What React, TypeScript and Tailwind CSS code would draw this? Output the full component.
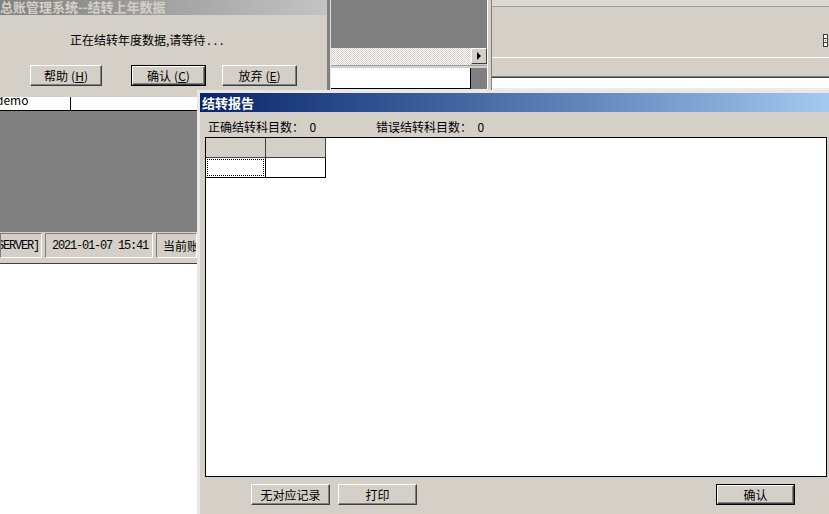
import React from 'react';

function Btn({ children, className, isDefault }: { children: React.ReactNode; className: string; isDefault?: boolean }) {
    const face = (
        <div className="flex h-full w-full items-center justify-center border border-t-white border-l-white border-r-[#404040] border-b-[#404040] bg-[#d4d0c8] shadow-[inset_-1px_-1px_0_#808080] leading-none text-black">
            {children}
        </div>
    );
    if (isDefault) {
        return <div className={`${className} border border-black`}>{face}</div>;
    }
    return <div className={className}>{face}</div>;
}

function Hot({ label, k }: { label: string; k: string }) {
    return (
        <span className="whitespace-nowrap">
            {label}
            <span className="ml-[3px]">(<span className="underline">{k}</span>)</span>
        </span>
    );
}

// status bar pane, sunken
function Pane({ children, className }: { children: React.ReactNode; className: string }) {
    return (
        <div className={`${className} h-[25px] flex items-center border border-t-[#808080] border-l-[#808080] border-r-white border-b-white overflow-hidden whitespace-nowrap`}>
            {children}
        </div>
    );
}

export default function App() {
    return (
        <div className="relative w-[829px] h-[514px] overflow-hidden bg-white text-[12px] text-black font-['Noto_Sans_CJK_SC',sans-serif]">
            {/* background app, left */}
            <div className="absolute left-0 top-0 w-[197px] h-[264px] flex flex-col">
                <div className="h-[90px] bg-[#d4d0c8]" />
                <div className="h-[21px] flex bg-white border-b border-black">
                    <div className="w-[75px] border-r border-black pt-[3px] leading-[13px] -ml-[4px]">demo</div>
                    <div className="flex-1" />
                </div>
                <div className="flex-1 bg-[#808080]" />
                <div className="h-[32px] bg-[#d4d0c8] border-b border-[#404040] flex pt-[1px] gap-[3px]">
                    <Pane className="w-[42px] justify-end pr-[2px] font-['Liberation_Mono',monospace] tracking-[-1.2px]">[SERVER]</Pane>
                    <Pane className="w-[108px] pl-[6px] font-['Liberation_Mono',monospace] tracking-[-1.2px]">2021-01-07 15:41</Pane>
                    <Pane className="flex-1 pl-[6px]">当前账套</Pane>
                </div>
            </div>

            {/* middle window */}
            <div className="absolute left-[330px] top-0 w-[161px] h-[91px] flex bg-[#d4d0c8]">
                <div className="w-[157px] flex flex-col border-l border-[#e0e0e0]">
                    <div className="h-[48px] bg-[#808080]" />
                    <div className="h-[17px] flex bg-[#d4d0c8]">
                        <div className="flex-1 bg-[repeating-conic-gradient(#d4d0c8_0_25%,#ffffff_0_50%)] bg-[length:2px_2px]" />
                        <div className="w-[16px] h-[16px] flex items-center justify-center bg-[#d4d0c8] border border-t-white border-l-white border-r-[#404040] border-b-[#404040]">
                            <svg width="6" height="8" viewBox="0 0 6 8"><path d="M1 0 L5 4 L1 8 Z" fill="black" /></svg>
                        </div>
                    </div>
                    <div className="h-[3px] bg-[#d4d0c8] border-t border-[#a0a0a0]" />
                    <div className="h-[21px] flex">
                        <div className="w-[140px] bg-white border-r border-b border-black" />
                        <div className="flex-1 bg-[#808080]" />
                    </div>
                    <div className="flex-1 bg-[#ececec]" />
                </div>
                <div className="w-[4px] bg-[#d4d0c8] border-l border-white" />
            </div>

            {/* right window */}
            <div className="absolute left-[491px] top-0 w-[338px] h-[91px] flex flex-col border-l border-[#808080]">
                <div className="h-[7px] bg-[#dcd9d3] border-b border-[#a0a0a0]" />
                <div className="h-[50px] bg-[#d4d0c8] relative">
                    <svg className="absolute left-[331px] top-[27px]" width="8" height="13" viewBox="0 0 8 13">
                        <rect x="0.5" y="0.5" width="4" height="4" fill="white" stroke="#404040" />
                        <rect x="0.5" y="4.5" width="4" height="4" fill="white" stroke="#404040" />
                        <rect x="0.5" y="8.5" width="4" height="4" fill="white" stroke="#404040" />
                        <rect x="2" y="6" width="1" height="1" fill="#a03030" />
                        <rect x="6" y="2" width="1" height="1" fill="#606060" />
                        <rect x="6" y="6" width="1" height="1" fill="#606060" />
                        <rect x="6" y="10" width="1" height="1" fill="#606060" />
                    </svg>
                </div>
                <div className="h-[1px] bg-white" />
                <div className="h-[19px] bg-[#d4d0c8] border-b border-[#808080]" />
                <div className="h-[1px] bg-[#404040]" />
                <div className="h-[10px] bg-white" />
                <div className="flex-1 bg-[#ececec]" />
            </div>

            {/* dialog: 结转上年数据 */}
            <div className="absolute left-[-4px] top-[-6px] w-[334px] h-[103px] bg-[#d4d0c8] border-[3px] border-[#d4d0c8] border-r-[#808080] flex flex-col">
                <div className="h-[18px] shrink-0 flex items-center pl-[1px] bg-linear-to-r from-[#808080] to-[#c4c4c4] text-[#d4d0c8] text-[13px] font-bold leading-none whitespace-nowrap">
                    总账管理系统--结转上年数据
                </div>
                <div className="pt-[18px] pl-[71px] leading-[14px] whitespace-nowrap">
                    正在结转年度数据,请等待<span className="tracking-[3px] ml-[2px]">...</span>
                </div>
                <div className="mt-[18px] pl-[31px] flex">
                    <Btn className="w-[72px] h-[21px]"><Hot label="帮助" k="H" /></Btn>
                    <Btn className="ml-[29px] w-[75px] h-[21px]" isDefault><Hot label="确认" k="C" /></Btn>
                    <Btn className="ml-[16px] w-[75px] h-[21px]"><Hot label="放弃" k="E" /></Btn>
                </div>
            </div>

            {/* dialog: 结转报告 */}
            <div className="absolute left-[197px] top-[90px] w-[640px] h-[430px] bg-[#d4d0c8] border-[3px] border-[#d4d0c8] border-l-[#e8e8e8] border-t-[#e8e8e8] flex flex-col">
                <div className="h-[19px] shrink-0 flex items-center pl-[2px] bg-linear-to-r from-[#0a246a] to-[#a6caf0] text-white text-[13px] font-bold leading-none">
                    结转报告
                </div>
                <div className="pt-[8px] h-[22px] flex leading-[14px] whitespace-nowrap">
                    <span className="ml-[8px]">正确结转科目数：&nbsp;&nbsp;0</span>
                    <span className="ml-[60px]">错误结转科目数：&nbsp;&nbsp;0</span>
                </div>
                <div className="mt-[3px] ml-[5px] w-[622px] h-[340px] bg-white border border-black">
                    <div className="flex">
                        <div className="w-[60px] h-[20px] bg-[#d4d0c8] border-r border-b border-[#404040]" />
                        <div className="w-[60px] h-[20px] bg-[#d4d0c8] border-r border-b border-[#404040]" />
                    </div>
                    <div className="flex">
                        <div className="w-[60px] h-[20px] border-r border-b border-black p-[1px]">
                            <div className="h-full w-full border border-dotted border-black" />
                        </div>
                        <div className="w-[60px] h-[20px] border-r border-b border-black" />
                    </div>
                </div>
                <div className="mt-[7px] flex">
                    <Btn className="ml-[51px] w-[79px] h-[21px]">无对应记录</Btn>
                    <Btn className="ml-[8px] w-[79px] h-[21px]">打印</Btn>
                    <Btn className="ml-[299px] w-[79px] h-[21px]" isDefault>确认</Btn>
                </div>
            </div>
        </div>
    );
}
